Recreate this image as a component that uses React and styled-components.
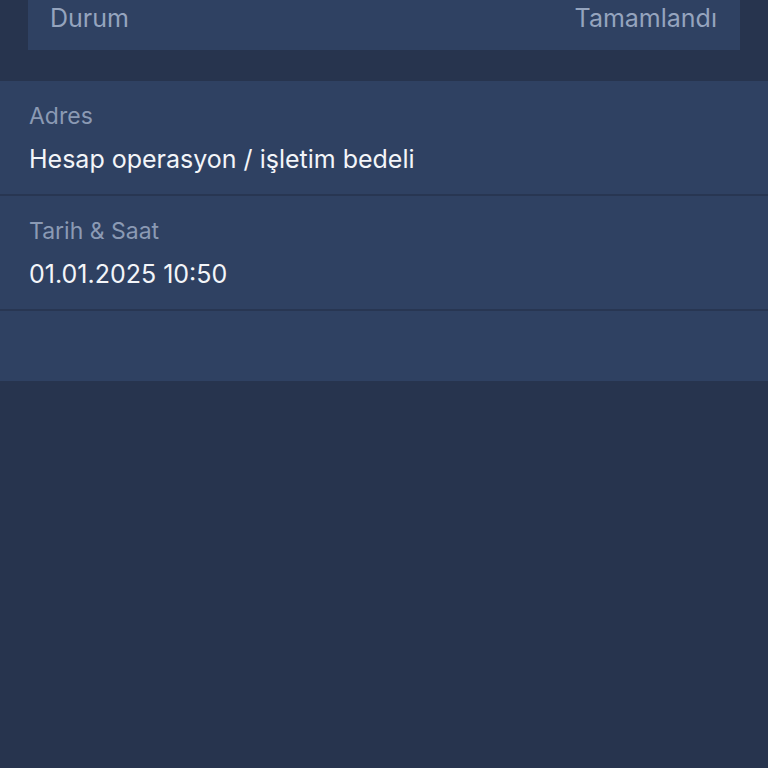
import React from "react";
import styled, { createGlobalStyle } from "styled-components";

const GlobalStyle = createGlobalStyle`
  html, body {
    margin: 0;
    padding: 0;
    background: #27344e;
  }
  body {
    font-family: Inter, "Noto Sans", sans-serif;
    -webkit-font-smoothing: antialiased;
  }
`;

const rows = [
  { label: "Adres", value: "Hesap operasyon / işletim bedeli" },
  { label: "Tarih & Saat", value: "01.01.2025 10:50" },
];

const App = () => {
  return (
    <>
      <GlobalStyle />
      <Page>
        <StatusWrap>
          <StatusCard>
            <StatusText>Durum</StatusText>
            <StatusText>Tamamlandı</StatusText>
          </StatusCard>
        </StatusWrap>
        <DetailList>
          {rows.map((r) => (
            <DetailRow key={r.label}>
              <Label>{r.label}</Label>
              <Value>{r.value}</Value>
            </DetailRow>
          ))}
          <EmptyRow />
        </DetailList>
      </Page>
    </>
  );
};

const Page = styled.div`
  width: 768px;
  height: 768px;
  background: #27344e;
  overflow: hidden;
`;

const StatusWrap = styled.div`
  padding: 0 28px 31px;
`;

const StatusCard = styled.div`
  height: 50px;
  box-sizing: border-box;
  padding: 3px 23px 0 22px;
  background: #2f4162;
  display: flex;
  justify-content: space-between;
  align-items: flex-start;
`;

const StatusText = styled.span`
  font-size: 25px;
  line-height: 30px;
  color: #95a4be;
`;

const DetailList = styled.div`
  display: flex;
  flex-direction: column;
  background: #2f4162;
`;

const DetailRow = styled.div`
  height: 115px;
  box-sizing: border-box;
  padding: 21px 29px 0;
  border-bottom: 2px solid #283652;
  display: flex;
  flex-direction: column;
  gap: 14px;
`;

const Label = styled.span`
  font-size: 23px;
  line-height: 28px;
  color: #8b9ab4;
`;

const Value = styled.span`
  font-size: 25px;
  line-height: 30px;
  color: #f3f5f9;
`;

const EmptyRow = styled.div`
  height: 70px;
`;

export default App;
